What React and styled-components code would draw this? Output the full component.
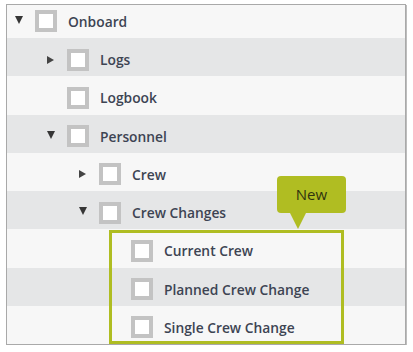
import React from 'react';
import styled, { createGlobalStyle } from 'styled-components';

const GlobalStyle = createGlobalStyle`
  body {
    margin: 0;
    background: #ffffff;
    font-family: "Open Sans", "Noto Sans", sans-serif;
  }
`;

const Page = styled.div`
  padding: 4px 0 0 6px;
`;

const Frame = styled.div`
  width: 398px;
  border: 1px solid #a9a9a9;
  box-shadow: 1px 1px 0 #bdbdbd;
  background: #fafafa;
  overflow: hidden;
`;

const List = styled.div`
  margin-top: -5.25px;
`;

const Row = styled.div`
  display: flex;
  align-items: center;
  box-sizing: border-box;
  height: 38.25px;
  padding: 5px 0 0 ${p => 8 + p.$level * 32}px;
  background: ${p => (p.$shade ? '#e5e6e7' : '#f7f7f7')};
`;

const Toggle = styled.span`
  display: flex;
  align-items: center;
  width: 20px;
  height: 22px;
`;

const Arrow = styled.span`
  width: 0;
  height: 0;
  ${p => p.$open ? `
    margin-top: -3px;
    border-left: 4.5px solid transparent;
    border-right: 4.5px solid transparent;
    border-top: 8px solid #363636;
  ` : `
    border-top: 4.5px solid transparent;
    border-bottom: 4.5px solid transparent;
    border-left: 7px solid #444;
  `}
`;

const Check = styled.span`
  box-sizing: border-box;
  width: 22px;
  height: 22px;
  margin-right: 11px;
  border: 4px solid #c3c3c3;
  background: #ffffff;
`;

const Label = styled.span`
  font-size: 13.8px;
  font-weight: 600;
  color: #3d4453;
  white-space: nowrap;
`;

const Group = styled.div`
  position: relative;

  &::after {
    content: '';
    position: absolute;
    top: 0.75px;
    bottom: 0;
    left: 102px;
    width: 235px;
    box-sizing: border-box;
    border: 3px solid #afbd22;
    pointer-events: none;
  }
`;

const Badge = styled.div`
  position: absolute;
  left: 270px;
  top: -53px;
  width: 69px;
  height: 37px;
  border-radius: 4px;
  background: #b0bd22;
  color: #30340f;
  font-size: 15px;
  line-height: 37px;
  text-align: center;

  &::after {
    content: '';
    position: absolute;
    top: 100%;
    left: 13px;
    border-left: 8px solid transparent;
    border-right: 8px solid transparent;
    border-top: 16px solid #b0bd22;
  }
`;

const tree = [
  { label: 'Onboard', level: 0, open: true },
  { label: 'Logs', level: 1, open: false },
  { label: 'Logbook', level: 1 },
  { label: 'Personnel', level: 1, open: true },
  { label: 'Crew', level: 2, open: false },
  { label: 'Crew Changes', level: 2, open: true },
];

const newItems = ['Current Crew', 'Planned Crew Change', 'Single Crew Change'];

function TreeRow({ label, level, open, index }) {
  return (
    <Row $level={level} $shade={index % 2 === 1}>
      <Toggle>{open !== undefined && <Arrow $open={open} />}</Toggle>
      <Check />
      <Label>{label}</Label>
    </Row>
  );
}

export default function App() {
  return (
    <>
      <GlobalStyle />
      <Page>
        <Frame>
          <List>
            {tree.map((node, i) => (
              <TreeRow key={node.label} {...node} index={i} />
            ))}
            <Group>
              <Badge>New</Badge>
              {newItems.map((label, i) => (
                <TreeRow key={label} label={label} level={3} index={tree.length + i} />
              ))}
            </Group>
          </List>
        </Frame>
      </Page>
    </>
  );
}
